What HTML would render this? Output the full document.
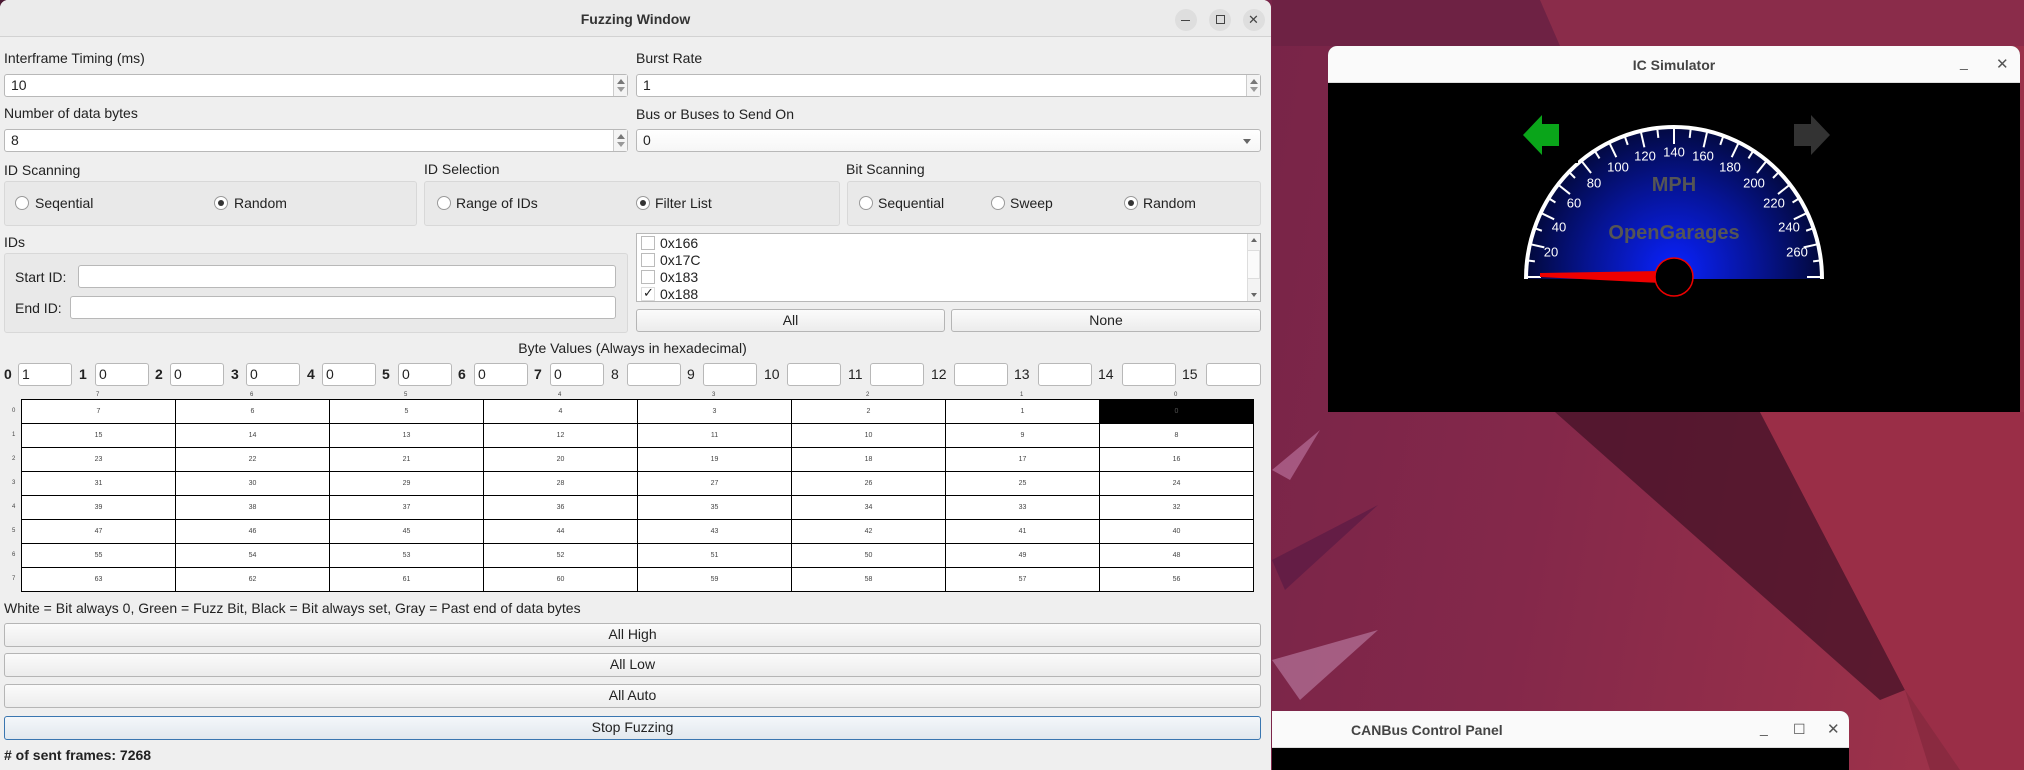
<!DOCTYPE html>
<html><head><meta charset="utf-8"><style>
*{box-sizing:border-box;margin:0;padding:0}
body{width:2024px;height:770px;overflow:hidden;position:relative;font-family:"Liberation Sans",sans-serif;font-size:14px;color:#222;background:linear-gradient(100deg,#4a1832 0%,#6a2046 40%,#84284a 75%,#a2344a 100%)}
.a{position:absolute}
.win{position:absolute;left:0;top:0;width:1271px;height:770px;background:#efefef;border-radius:8px 8px 0 0}
.tb{position:absolute;left:0;top:0;width:1271px;height:37px;background:#ebebeb;border-bottom:1px solid #d2d2d2;border-radius:8px 8px 0 0}
.lbl{position:absolute;white-space:nowrap;line-height:16px}
.inp{position:absolute;background:#fff;border:1px solid #b8b8b8;border-radius:3px;line-height:21px;padding-left:6px}
.spin{position:absolute;right:0;top:0;bottom:0;width:14px;border-left:1px solid #ccc;background:#f4f4f4}
.spin:before{content:"";position:absolute;left:3px;top:4px;border:4px solid transparent;border-bottom:5px solid #777;border-top:0}
.spin:after{content:"";position:absolute;left:3px;bottom:4px;border:4px solid transparent;border-top:5px solid #999;border-bottom:0}
.grp{position:absolute;border:1px solid #d8d8d8;border-radius:3px;background:#e9e9e9}
.rad{position:absolute;width:14px;height:14px;border-radius:50%;border:1px solid #9a9a9a;background:#fff}
.rad.on:after{content:"";position:absolute;left:3px;top:3px;width:6px;height:6px;border-radius:50%;background:#333}
.btn{position:absolute;border:1px solid #b5b5b5;border-radius:3px;background:linear-gradient(#fbfbfb,#ececec);text-align:center;line-height:21px}
.cb{position:absolute;width:14px;height:14px;border:1px solid #bbb;background:#fff;left:4px}
.bl{position:absolute;top:363px;line-height:23px;font-size:14px}
.bi{position:absolute;top:363px;height:23px;background:#fff;border:1px solid #b8b8b8;border-radius:3px;line-height:21px;padding-left:3px}
.cell{position:absolute;width:154px;height:24px;border-right:1px solid #000;border-bottom:1px solid #000;text-align:center;line-height:23px;font-size:7px;color:#444;background:#fff}
.sm{position:absolute;font-size:6px;color:#444}
</style></head><body>
<!-- desktop decorations -->
<svg class="a" style="left:0;top:0" width="2024" height="770">
<polygon points="1555,412 1760,412 1905,690 1880,700" fill="#3f1024" opacity="0.7"/>
<polygon points="1760,412 2024,412 2024,770 1960,770 1905,690" fill="#9a2e47"/>
<polygon points="1905,690 1960,770 1930,770" fill="#8a2a40"/>
<polygon points="1272,470 1320,430 1290,480" fill="#c27aa5" opacity="0.6"/>
<polygon points="1272,660 1378,630 1300,700" fill="#c58ab0" opacity="0.55"/>
<polygon points="1272,560 1378,505 1285,590" fill="#5a1a44" opacity="0.7"/>
<rect x="1272" y="0" width="752" height="46" fill="#6e2244"/>
<polygon points="1540,0 2024,0 2024,46 1560,46" fill="#8a2c4a"/>
</svg>

<!-- IC Simulator -->
<div class="a" style="left:1328px;top:46px;width:692px;height:366px;background:#000;border-radius:9px 9px 0 0;overflow:hidden">
<div class="a" style="left:0;top:0;width:692px;height:37px;background:#fafafa;border-bottom:1px solid #ddd"></div>
<div class="lbl" style="left:0;width:692px;text-align:center;top:11px;font-weight:bold;color:#444;font-size:14px">IC Simulator</div>
<div class="lbl" style="left:632px;top:8px;color:#555">_</div>
<div class="lbl" style="left:668px;top:11px;color:#555;font-size:15px">✕</div>
</div>
<svg class="a" style="left:0;top:0" width="2024" height="770">
<defs><radialGradient id="g" cx="1674" cy="270" r="150" gradientUnits="userSpaceOnUse"><stop offset="0" stop-color="#0a22ff"/><stop offset="0.55" stop-color="#061496"/><stop offset="1" stop-color="#020838"/></radialGradient></defs>
<path d="M1526,279 A148,152 0 0 1 1822,279 Z" fill="url(#g)"/>
<path d="M1526,279 A148,152 0 0 1 1822,279" fill="none" stroke="#fff" stroke-width="4"/>
<g stroke="#fff" stroke-width="2">
<line x1="1526" y1="277" x2="1541" y2="277" transform="rotate(0 1674 277)"/>
<line x1="1526" y1="277" x2="1534" y2="277" transform="rotate(6.43 1674 277)"/>
<line x1="1526" y1="277" x2="1541" y2="277" transform="rotate(12.86 1674 277)"/>
<line x1="1526" y1="277" x2="1534" y2="277" transform="rotate(19.29 1674 277)"/>
<line x1="1526" y1="277" x2="1541" y2="277" transform="rotate(25.71 1674 277)"/>
<line x1="1526" y1="277" x2="1534" y2="277" transform="rotate(32.14 1674 277)"/>
<line x1="1526" y1="277" x2="1541" y2="277" transform="rotate(38.57 1674 277)"/>
<line x1="1526" y1="277" x2="1534" y2="277" transform="rotate(45 1674 277)"/>
<line x1="1526" y1="277" x2="1541" y2="277" transform="rotate(51.43 1674 277)"/>
<line x1="1526" y1="277" x2="1534" y2="277" transform="rotate(57.86 1674 277)"/>
<line x1="1526" y1="277" x2="1541" y2="277" transform="rotate(64.29 1674 277)"/>
<line x1="1526" y1="277" x2="1534" y2="277" transform="rotate(70.71 1674 277)"/>
<line x1="1526" y1="277" x2="1541" y2="277" transform="rotate(77.14 1674 277)"/>
<line x1="1526" y1="277" x2="1534" y2="277" transform="rotate(83.57 1674 277)"/>
<line x1="1526" y1="277" x2="1541" y2="277" transform="rotate(90 1674 277)"/>
<line x1="1526" y1="277" x2="1534" y2="277" transform="rotate(96.43 1674 277)"/>
<line x1="1526" y1="277" x2="1541" y2="277" transform="rotate(102.86 1674 277)"/>
<line x1="1526" y1="277" x2="1534" y2="277" transform="rotate(109.29 1674 277)"/>
<line x1="1526" y1="277" x2="1541" y2="277" transform="rotate(115.71 1674 277)"/>
<line x1="1526" y1="277" x2="1534" y2="277" transform="rotate(122.14 1674 277)"/>
<line x1="1526" y1="277" x2="1541" y2="277" transform="rotate(128.57 1674 277)"/>
<line x1="1526" y1="277" x2="1534" y2="277" transform="rotate(135 1674 277)"/>
<line x1="1526" y1="277" x2="1541" y2="277" transform="rotate(141.43 1674 277)"/>
<line x1="1526" y1="277" x2="1534" y2="277" transform="rotate(147.86 1674 277)"/>
<line x1="1526" y1="277" x2="1541" y2="277" transform="rotate(154.29 1674 277)"/>
<line x1="1526" y1="277" x2="1534" y2="277" transform="rotate(160.71 1674 277)"/>
<line x1="1526" y1="277" x2="1541" y2="277" transform="rotate(167.14 1674 277)"/>
<line x1="1526" y1="277" x2="1534" y2="277" transform="rotate(173.57 1674 277)"/>
<line x1="1526" y1="277" x2="1541" y2="277" transform="rotate(180 1674 277)"/>
</g>
<rect x="1518" y="90" width="60" height="73" fill="#000"/>
<g fill="#fff" font-family="Liberation Sans,sans-serif" font-size="13" text-anchor="middle" dominant-baseline="middle">
<text x="1551" y="253">20</text><text x="1559" y="228">40</text><text x="1574" y="204">60</text><text x="1594" y="184">80</text><text x="1618" y="168">100</text><text x="1645" y="157">120</text><text x="1674" y="153">140</text><text x="1703" y="157">160</text><text x="1730" y="168">180</text><text x="1754" y="184">200</text><text x="1774" y="204">220</text><text x="1789" y="228">240</text><text x="1797" y="253">260</text>
</g>
<g fill="#555" font-family="Liberation Sans,sans-serif" font-weight="bold" font-size="20" text-anchor="middle">
<text x="1674" y="191">MPH</text><text x="1674" y="239">OpenGarages</text>
</g>
<polygon points="1540,273 1660,271 1660,283 1540,277" fill="#e00"/>
<circle cx="1674" cy="277" r="19" fill="#000" stroke="#e00" stroke-width="1.5"/>
<polygon points="1523,135 1542,115 1542,124 1559,124 1559,146 1542,146 1542,155" fill="#0aa51a"/>
<polygon points="1830,135 1811,115 1811,124 1794,124 1794,146 1811,146 1811,155" fill="#333"/>
</svg>

<!-- CANBus window -->
<div class="a" style="left:1272px;top:711px;width:577px;height:59px;background:#000;border-radius:0 9px 0 0;overflow:hidden">
<div class="a" style="left:0;top:0;width:577px;height:37px;background:#fafafa;border-bottom:1px solid #ddd"></div>
<div class="lbl" style="left:79px;top:11px;font-weight:bold;color:#444">CANBus Control Panel</div>
<div class="lbl" style="left:488px;top:9px;color:#555">_</div>
<div class="lbl" style="left:521px;top:10px;color:#555">☐</div>
<div class="lbl" style="left:555px;top:11px;color:#555;font-size:15px">✕</div>
</div>

<!-- Fuzzing window -->
<div class="win">
<div class="tb"></div>
<div class="lbl" style="left:0;width:1271px;text-align:center;top:11px;font-weight:bold;color:#333">Fuzzing Window</div>
<div class="a" style="left:1175px;top:9px;width:22px;height:22px;border-radius:50%;background:#dedede"></div>
<div class="a" style="left:1181px;top:20px;width:9px;height:1px;background:#444"></div>
<div class="a" style="left:1209px;top:9px;width:22px;height:22px;border-radius:50%;background:#dedede"></div>
<div class="a" style="left:1216px;top:15px;width:9px;height:9px;border:1px solid #444"></div>
<div class="a" style="left:1243px;top:9px;width:22px;height:22px;border-radius:50%;background:#dedede"></div>
<div class="lbl" style="left:1248px;top:12px;font-size:13px;color:#444">✕</div>

<div class="lbl" style="left:4px;top:50px">Interframe Timing (ms)</div>
<div class="inp" style="left:4px;top:74px;width:624px;height:23px">10<div class="spin"></div></div>
<div class="lbl" style="left:636px;top:50px">Burst Rate</div>
<div class="inp" style="left:636px;top:74px;width:625px;height:23px">1<div class="spin"></div></div>
<div class="lbl" style="left:4px;top:105px">Number of data bytes</div>
<div class="inp" style="left:4px;top:129px;width:624px;height:23px">8<div class="spin"></div></div>
<div class="lbl" style="left:636px;top:106px">Bus or Buses to Send On</div>
<div class="inp" style="left:636px;top:129px;width:625px;height:23px;background:linear-gradient(#fff,#f6f6f6)">0<div class="a" style="right:9px;top:9px;border:4px solid transparent;border-top:5px solid #666;border-bottom:0"></div></div>

<div class="lbl" style="left:4px;top:162px">ID Scanning</div>
<div class="grp" style="left:4px;top:181px;width:413px;height:45px"></div>
<div class="rad" style="left:15px;top:196px"></div><div class="lbl" style="left:35px;top:195px">Seqential</div>
<div class="rad on" style="left:214px;top:196px"></div><div class="lbl" style="left:234px;top:195px">Random</div>
<div class="lbl" style="left:424px;top:161px">ID Selection</div>
<div class="grp" style="left:424px;top:181px;width:416px;height:45px"></div>
<div class="rad" style="left:437px;top:196px"></div><div class="lbl" style="left:456px;top:195px">Range of IDs</div>
<div class="rad on" style="left:636px;top:196px"></div><div class="lbl" style="left:655px;top:195px">Filter List</div>
<div class="lbl" style="left:846px;top:161px">Bit Scanning</div>
<div class="grp" style="left:847px;top:181px;width:414px;height:45px"></div>
<div class="rad" style="left:859px;top:196px"></div><div class="lbl" style="left:878px;top:195px">Sequential</div>
<div class="rad" style="left:991px;top:196px"></div><div class="lbl" style="left:1010px;top:195px">Sweep</div>
<div class="rad on" style="left:1124px;top:196px"></div><div class="lbl" style="left:1143px;top:195px">Random</div>

<div class="lbl" style="left:4px;top:234px">IDs</div>
<div class="grp" style="left:4px;top:253px;width:624px;height:80px"></div>
<div class="lbl" style="left:15px;top:269px">Start ID:</div>
<div class="inp" style="left:78px;top:265px;width:538px;height:23px"></div>
<div class="lbl" style="left:15px;top:300px">End ID:</div>
<div class="inp" style="left:70px;top:296px;width:546px;height:23px"></div>

<div class="a" style="left:636px;top:233px;width:625px;height:69px;background:#fff;border:1px solid #b8b8b8">
<div class="cb" style="top:2px"></div><div class="lbl" style="left:23px;top:1px">0x166</div>
<div class="cb" style="top:19px"></div><div class="lbl" style="left:23px;top:18px">0x17C</div>
<div class="cb" style="top:36px"></div><div class="lbl" style="left:23px;top:35px">0x183</div>
<div class="cb" style="top:53px;border-color:#ddd"></div><div class="lbl" style="left:6px;top:51px;font-size:13px">✓</div><div class="lbl" style="left:23px;top:52px">0x188</div>
<div class="a" style="right:0;top:0;width:13px;height:67px;background:#f3f3f3;border-left:1px solid #ddd"></div>
<div class="a" style="right:0;top:16px;width:13px;height:29px;background:#fafafa;border:1px solid #ddd"></div>
<div class="a" style="right:3px;top:4px;border:3px solid transparent;border-bottom:4px solid #666;border-top:0"></div>
<div class="a" style="right:3px;bottom:4px;border:3px solid transparent;border-top:4px solid #666;border-bottom:0"></div>
</div>
<div class="btn" style="left:636px;top:309px;width:309px;height:23px">All</div>
<div class="btn" style="left:951px;top:309px;width:310px;height:23px">None</div>

<div class="lbl" style="left:0;width:1265px;text-align:center;top:340px">Byte Values (Always in hexadecimal)</div>
<div class="bl" style="left:4px;font-weight:bold">0</div><div class="bi" style="left:18px;width:54px">1</div>
<div class="bl" style="left:79px;font-weight:bold">1</div><div class="bi" style="left:95px;width:54px">0</div>
<div class="bl" style="left:155px;font-weight:bold">2</div><div class="bi" style="left:170px;width:54px">0</div>
<div class="bl" style="left:231px;font-weight:bold">3</div><div class="bi" style="left:246px;width:54px">0</div>
<div class="bl" style="left:307px;font-weight:bold">4</div><div class="bi" style="left:322px;width:54px">0</div>
<div class="bl" style="left:382px;font-weight:bold">5</div><div class="bi" style="left:398px;width:54px">0</div>
<div class="bl" style="left:458px;font-weight:bold">6</div><div class="bi" style="left:474px;width:54px">0</div>
<div class="bl" style="left:534px;font-weight:bold">7</div><div class="bi" style="left:550px;width:54px">0</div>
<div class="bl" style="left:611px">8</div><div class="bi" style="left:627px;width:54px"></div>
<div class="bl" style="left:687px">9</div><div class="bi" style="left:703px;width:54px"></div>
<div class="bl" style="left:764px">10</div><div class="bi" style="left:787px;width:54px"></div>
<div class="bl" style="left:848px">11</div><div class="bi" style="left:870px;width:54px"></div>
<div class="bl" style="left:931px">12</div><div class="bi" style="left:954px;width:54px"></div>
<div class="bl" style="left:1014px">13</div><div class="bi" style="left:1038px;width:54px"></div>
<div class="bl" style="left:1098px">14</div><div class="bi" style="left:1122px;width:54px"></div>
<div class="bl" style="left:1182px">15</div><div class="bi" style="left:1206px;width:55px"></div>

<div class="sm" style="left:96px;top:392px">7</div><div class="sm" style="left:250px;top:392px">6</div><div class="sm" style="left:404px;top:392px">5</div><div class="sm" style="left:558px;top:392px">4</div><div class="sm" style="left:712px;top:392px">3</div><div class="sm" style="left:866px;top:392px">2</div><div class="sm" style="left:1020px;top:392px">1</div><div class="sm" style="left:1174px;top:392px">0</div>
<div class="sm" style="left:12px;top:408px">0</div><div class="sm" style="left:12px;top:432px">1</div><div class="sm" style="left:12px;top:456px">2</div><div class="sm" style="left:12px;top:480px">3</div><div class="sm" style="left:12px;top:504px">4</div><div class="sm" style="left:12px;top:528px">5</div><div class="sm" style="left:12px;top:552px">6</div><div class="sm" style="left:12px;top:576px">7</div>

<div class="a" style="left:21px;top:399px;width:1233px;height:193px;border-left:1px solid #000;border-top:1px solid #000;background:#fff">
<div class="cell" style="left:0;top:0">7</div><div class="cell" style="left:154px;top:0">6</div><div class="cell" style="left:308px;top:0">5</div><div class="cell" style="left:462px;top:0">4</div><div class="cell" style="left:616px;top:0">3</div><div class="cell" style="left:770px;top:0">2</div><div class="cell" style="left:924px;top:0">1</div><div class="cell" style="left:1078px;top:0;background:#000;color:#555">0</div>
<div class="cell" style="left:0;top:24px">15</div><div class="cell" style="left:154px;top:24px">14</div><div class="cell" style="left:308px;top:24px">13</div><div class="cell" style="left:462px;top:24px">12</div><div class="cell" style="left:616px;top:24px">11</div><div class="cell" style="left:770px;top:24px">10</div><div class="cell" style="left:924px;top:24px">9</div><div class="cell" style="left:1078px;top:24px">8</div>
<div class="cell" style="left:0;top:48px">23</div><div class="cell" style="left:154px;top:48px">22</div><div class="cell" style="left:308px;top:48px">21</div><div class="cell" style="left:462px;top:48px">20</div><div class="cell" style="left:616px;top:48px">19</div><div class="cell" style="left:770px;top:48px">18</div><div class="cell" style="left:924px;top:48px">17</div><div class="cell" style="left:1078px;top:48px">16</div>
<div class="cell" style="left:0;top:72px">31</div><div class="cell" style="left:154px;top:72px">30</div><div class="cell" style="left:308px;top:72px">29</div><div class="cell" style="left:462px;top:72px">28</div><div class="cell" style="left:616px;top:72px">27</div><div class="cell" style="left:770px;top:72px">26</div><div class="cell" style="left:924px;top:72px">25</div><div class="cell" style="left:1078px;top:72px">24</div>
<div class="cell" style="left:0;top:96px">39</div><div class="cell" style="left:154px;top:96px">38</div><div class="cell" style="left:308px;top:96px">37</div><div class="cell" style="left:462px;top:96px">36</div><div class="cell" style="left:616px;top:96px">35</div><div class="cell" style="left:770px;top:96px">34</div><div class="cell" style="left:924px;top:96px">33</div><div class="cell" style="left:1078px;top:96px">32</div>
<div class="cell" style="left:0;top:120px">47</div><div class="cell" style="left:154px;top:120px">46</div><div class="cell" style="left:308px;top:120px">45</div><div class="cell" style="left:462px;top:120px">44</div><div class="cell" style="left:616px;top:120px">43</div><div class="cell" style="left:770px;top:120px">42</div><div class="cell" style="left:924px;top:120px">41</div><div class="cell" style="left:1078px;top:120px">40</div>
<div class="cell" style="left:0;top:144px">55</div><div class="cell" style="left:154px;top:144px">54</div><div class="cell" style="left:308px;top:144px">53</div><div class="cell" style="left:462px;top:144px">52</div><div class="cell" style="left:616px;top:144px">51</div><div class="cell" style="left:770px;top:144px">50</div><div class="cell" style="left:924px;top:144px">49</div><div class="cell" style="left:1078px;top:144px">48</div>
<div class="cell" style="left:0;top:168px">63</div><div class="cell" style="left:154px;top:168px">62</div><div class="cell" style="left:308px;top:168px">61</div><div class="cell" style="left:462px;top:168px">60</div><div class="cell" style="left:616px;top:168px">59</div><div class="cell" style="left:770px;top:168px">58</div><div class="cell" style="left:924px;top:168px">57</div><div class="cell" style="left:1078px;top:168px">56</div>
</div>

<div class="lbl" style="left:4px;top:600px">White = Bit always 0, Green = Fuzz Bit, Black = Bit always set, Gray = Past end of data bytes</div>
<div class="btn" style="left:4px;top:623px;width:1257px;height:24px">All High</div>
<div class="btn" style="left:4px;top:653px;width:1257px;height:24px">All Low</div>
<div class="btn" style="left:4px;top:684px;width:1257px;height:24px">All Auto</div>
<div class="btn" style="left:4px;top:716px;width:1257px;height:24px;border-color:#3a76b0;background:linear-gradient(#f4f7fa,#e2e8ee)">Stop Fuzzing</div>
<div class="lbl" style="left:4px;top:747px;font-weight:bold">#  of sent frames: 7268</div>
</div>
</body></html>
